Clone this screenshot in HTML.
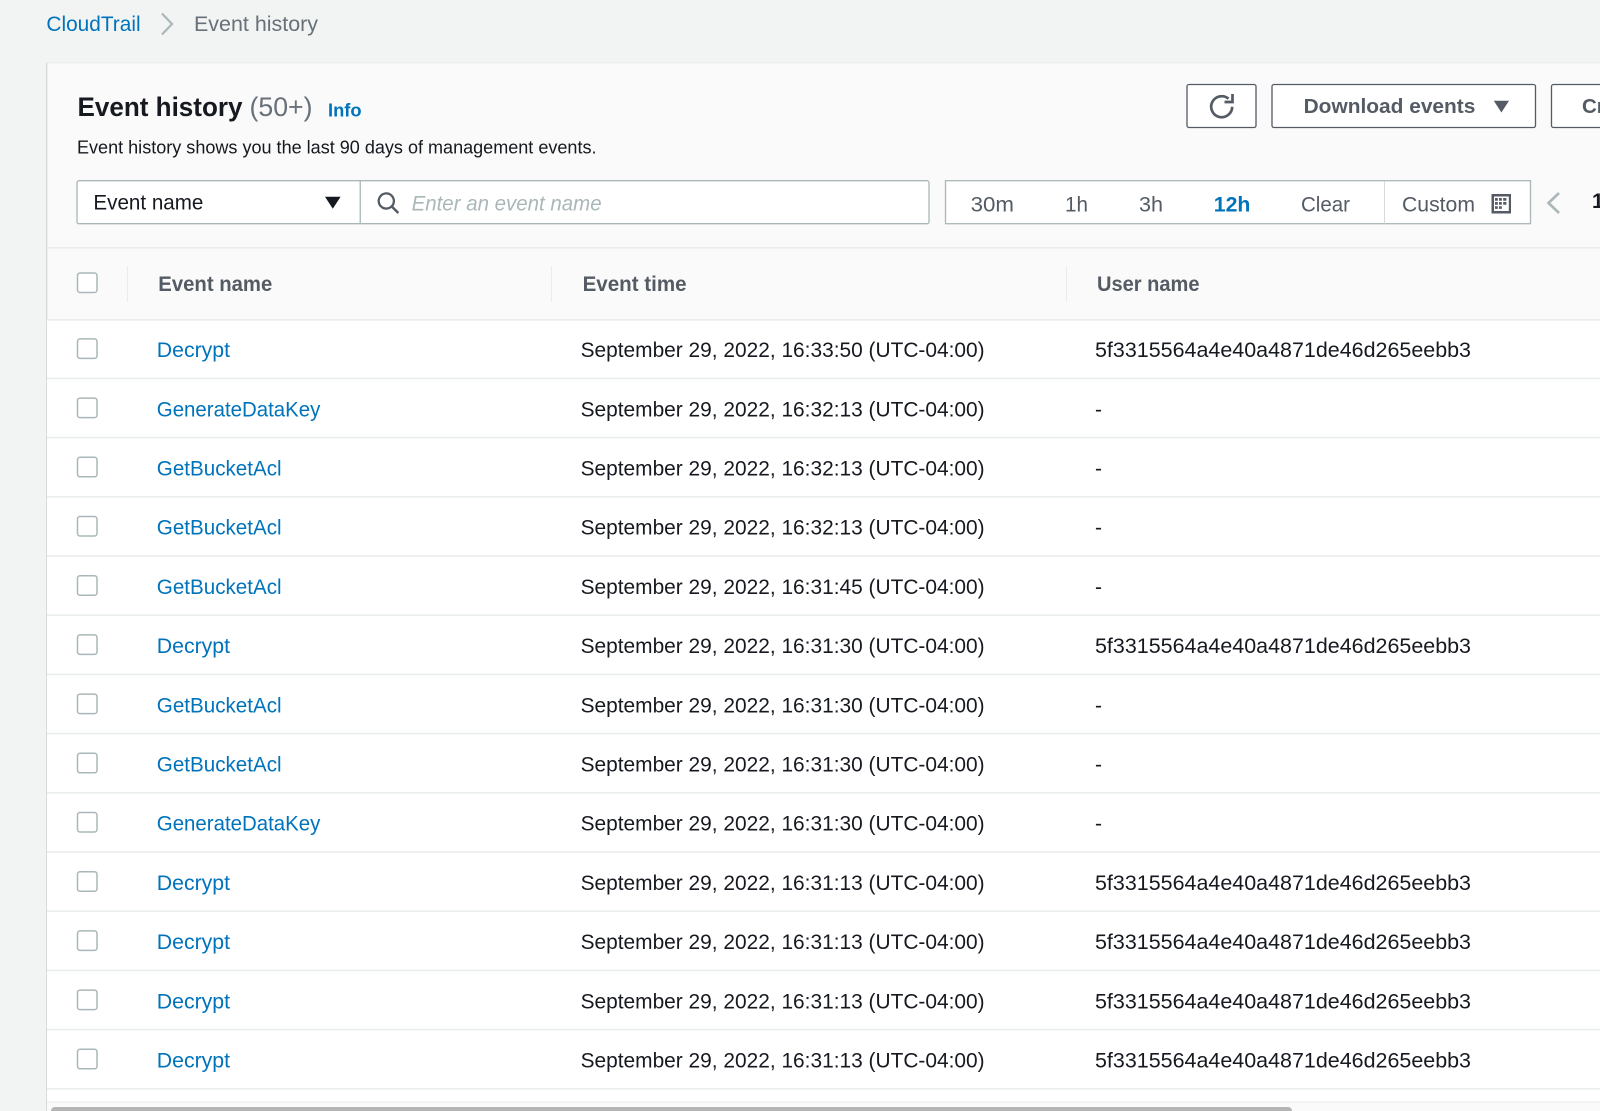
<!DOCTYPE html>
<html lang="en">
<head>
<meta charset="utf-8">
<title>CloudTrail Event history</title>
<style>
html,body{margin:0;padding:0;width:1600px;height:1111px;overflow:hidden;background:#f2f3f3}
svg{display:block}
text{font-family:"Liberation Sans",sans-serif;white-space:pre}
.r{font-size:21px;fill:#16191f}
.l{font-size:21px;fill:#0073bb}
.h{font-size:21px;font-weight:700;fill:#545b64}
.t{font-size:21px;fill:#545b64}
.cb{fill:#fff;stroke:#aab7b8;stroke-width:1.5}
</style>
</head>
<body>
<svg width="1600" height="1111" viewBox="0 0 1600 1111" xmlns="http://www.w3.org/2000/svg">
<defs>
<g id="cb"><rect class="cb" x="77.5" y="19.5" width="19.5" height="19.5" rx="2.5"/></g>
<g id="line"><rect x="47" y="58.2" width="1553" height="1.6" fill="#eaeded"/></g>
</defs>
<rect width="1600" height="1111" fill="#f2f3f3"/>

<!-- breadcrumb -->
<text x="46.4" y="31" font-size="21" fill="#0073bb" textLength="94.2" lengthAdjust="spacingAndGlyphs">CloudTrail</text>
<path d="M162 13.5 L172 24 L162 34.5" fill="none" stroke="#aab7b8" stroke-width="2.2"/>
<text x="194" y="31" font-size="21" fill="#687078" textLength="124" lengthAdjust="spacingAndGlyphs">Event history</text>

<!-- card -->
<rect x="46" y="63" width="1554" height="1048" fill="#fafafa"/>
<rect x="46" y="62.5" width="1554" height="1" fill="#eaeded"/>
<rect x="46" y="63" width="1.4" height="1048" fill="#d5dbdb"/>

<!-- title -->
<text x="77.5" y="116" font-size="26.6" font-weight="700" fill="#16191f" textLength="165" lengthAdjust="spacingAndGlyphs">Event history</text>
<text x="249.5" y="116" font-size="26.6" fill="#687078" textLength="63" lengthAdjust="spacingAndGlyphs">(50+)</text>
<text x="328" y="116.5" font-size="18.5" font-weight="700" fill="#0073bb" textLength="33.6" lengthAdjust="spacingAndGlyphs">Info</text>
<text x="77" y="153.3" font-size="18.4" fill="#16191f" textLength="519.5" lengthAdjust="spacingAndGlyphs">Event history shows you the last 90 days of management events.</text>

<!-- header buttons -->
<rect x="1187" y="84.5" width="69" height="43" rx="2" fill="#fff" stroke="#545b64" stroke-width="1.3"/>
<path d="M1232.2 106.800 A10.500 10.500 0 1 1 1228.500 98.700" fill="none" stroke="#545b64" stroke-width="2.700"/>
<path d="M1232.500 94 V102 H1224.500" fill="none" stroke="#545b64" stroke-width="2.700"/>
<rect x="1272" y="84.5" width="263.5" height="43" rx="2" fill="#fff" stroke="#545b64" stroke-width="1.3"/>
<text x="1303.6" y="113" font-size="20.5" font-weight="700" fill="#545b64" textLength="171.8" lengthAdjust="spacingAndGlyphs">Download events</text>
<path d="M1493.8 100.7 H1509 L1501.4 112.5 Z" fill="#545b64"/>
<rect x="1551.5" y="84.5" width="70" height="43" rx="2" fill="#fff" stroke="#545b64" stroke-width="1.3"/>
<text x="1582" y="113" font-size="20.5" font-weight="700" fill="#545b64">Create</text>

<!-- filter -->
<rect x="77" y="180.7" width="852" height="43" rx="2" fill="#fff" stroke="#aab7b8" stroke-width="1.3"/>
<rect x="359.6" y="181" width="1.3" height="43" fill="#aab7b8"/>
<text x="93.4" y="209.3" class="r" textLength="110" lengthAdjust="spacingAndGlyphs">Event name</text>
<path d="M325 196.7 H340.6 L332.8 208.7 Z" fill="#16191f"/>
<circle cx="386.3" cy="201" r="7.6" fill="none" stroke="#545b64" stroke-width="2.3"/>
<path d="M391.8 206.5 L398.3 213" fill="none" stroke="#545b64" stroke-width="2.5"/>
<text x="411.6" y="210.3" font-size="21" font-style="italic" fill="#aab7b8" textLength="190" lengthAdjust="spacingAndGlyphs">Enter an event name</text>

<!-- time range -->
<rect x="945.5" y="180.7" width="585" height="43" fill="#fff" stroke="#aab7b8" stroke-width="1.3"/>
<rect x="1384" y="181.5" width="1" height="42" fill="#d5dbdb"/>
<text x="970.6" y="211.5" class="t" textLength="43.4" lengthAdjust="spacingAndGlyphs">30m</text>
<text x="1065" y="211.5" class="t" textLength="23" lengthAdjust="spacingAndGlyphs">1h</text>
<text x="1139" y="211.5" class="t" textLength="24" lengthAdjust="spacingAndGlyphs">3h</text>
<text x="1213.8" y="211.5" font-size="21" font-weight="700" fill="#0073bb" textLength="36.6" lengthAdjust="spacingAndGlyphs">12h</text>
<text x="1301" y="211.5" class="t" textLength="49" lengthAdjust="spacingAndGlyphs">Clear</text>
<text x="1402" y="211.5" class="t" textLength="73" lengthAdjust="spacingAndGlyphs">Custom</text>
<rect x="1491.500" y="194" width="19.500" height="19.500" fill="#545b64"/>
<rect x="1494" y="196.500" width="14.800" height="14.500" fill="#fff"/>
<path d="M1495 198h2.800v2.700h-2.800zM1499 198h2.800v2.700h-2.800zM1503.200 198h3.200v2.700h-3.200zM1495 202h2.800v2.700h-2.800zM1499 202h2.800v2.700h-2.800zM1503.200 202h3.200v2.700h-3.200zM1495 206.200h2.800v2.700h-2.800zM1499 206.200h2.800v2.700h-2.800z" fill="#545b64"/>
<path d="M1559 193 L1548.500 203 L1559 213" fill="none" stroke="#aab7b8" stroke-width="2.600"/>
<text x="1592" y="208" font-size="21" font-weight="700" fill="#16191f">1</text>

<!-- table header -->
<rect x="47" y="247" width="1553" height="1.500" fill="#eaeded"/>
<rect class="cb" x="77.500" y="273" width="19.500" height="19.500" rx="2.500"/>
<rect x="127" y="266" width="1" height="36" fill="#eaeded"/>
<rect x="551" y="266" width="1" height="36" fill="#eaeded"/>
<rect x="1066" y="266" width="1" height="36" fill="#eaeded"/>
<text x="158.300" y="291" class="h" textLength="114" lengthAdjust="spacingAndGlyphs">Event name</text>
<text x="582.600" y="291" class="h" textLength="104" lengthAdjust="spacingAndGlyphs">Event time</text>
<text x="1097" y="291" class="h" textLength="102.500" lengthAdjust="spacingAndGlyphs">User name</text>

<!-- table body -->
<rect x="47" y="320" width="1553" height="782" fill="#fff"/>
<rect x="47" y="319" width="1553" height="1.600" fill="#eaeded"/>

<g transform="translate(0,319.400)"><use href="#cb"/><use href="#line"/><text x="156.800" y="37.700" class="l" textLength="73.200" lengthAdjust="spacingAndGlyphs">Decrypt</text><text x="580.600" y="37.700" class="r" textLength="404" lengthAdjust="spacingAndGlyphs">September 29, 2022, 16:33:50 (UTC-04:00)</text><text x="1095" y="37.700" class="r" textLength="376" lengthAdjust="spacingAndGlyphs">5f3315564a4e40a4871de46d265eebb3</text></g>
<g transform="translate(0,378.600)"><use href="#cb"/><use href="#line"/><text x="156.800" y="37.700" class="l" textLength="163.600" lengthAdjust="spacingAndGlyphs">GenerateDataKey</text><text x="580.600" y="37.700" class="r" textLength="404" lengthAdjust="spacingAndGlyphs">September 29, 2022, 16:32:13 (UTC-04:00)</text><text x="1095" y="37.700" class="r" textLength="8">-</text></g>
<g transform="translate(0,437.800)"><use href="#cb"/><use href="#line"/><text x="156.800" y="37.700" class="l" textLength="124.800" lengthAdjust="spacingAndGlyphs">GetBucketAcl</text><text x="580.600" y="37.700" class="r" textLength="404" lengthAdjust="spacingAndGlyphs">September 29, 2022, 16:32:13 (UTC-04:00)</text><text x="1095" y="37.700" class="r" textLength="8">-</text></g>
<g transform="translate(0,497)"><use href="#cb"/><use href="#line"/><text x="156.800" y="37.700" class="l" textLength="124.800" lengthAdjust="spacingAndGlyphs">GetBucketAcl</text><text x="580.600" y="37.700" class="r" textLength="404" lengthAdjust="spacingAndGlyphs">September 29, 2022, 16:32:13 (UTC-04:00)</text><text x="1095" y="37.700" class="r" textLength="8">-</text></g>
<g transform="translate(0,556.200)"><use href="#cb"/><use href="#line"/><text x="156.800" y="37.700" class="l" textLength="124.800" lengthAdjust="spacingAndGlyphs">GetBucketAcl</text><text x="580.600" y="37.700" class="r" textLength="404" lengthAdjust="spacingAndGlyphs">September 29, 2022, 16:31:45 (UTC-04:00)</text><text x="1095" y="37.700" class="r" textLength="8">-</text></g>
<g transform="translate(0,615.400)"><use href="#cb"/><use href="#line"/><text x="156.800" y="37.700" class="l" textLength="73.200" lengthAdjust="spacingAndGlyphs">Decrypt</text><text x="580.600" y="37.700" class="r" textLength="404" lengthAdjust="spacingAndGlyphs">September 29, 2022, 16:31:30 (UTC-04:00)</text><text x="1095" y="37.700" class="r" textLength="376" lengthAdjust="spacingAndGlyphs">5f3315564a4e40a4871de46d265eebb3</text></g>
<g transform="translate(0,674.600)"><use href="#cb"/><use href="#line"/><text x="156.800" y="37.700" class="l" textLength="124.800" lengthAdjust="spacingAndGlyphs">GetBucketAcl</text><text x="580.600" y="37.700" class="r" textLength="404" lengthAdjust="spacingAndGlyphs">September 29, 2022, 16:31:30 (UTC-04:00)</text><text x="1095" y="37.700" class="r" textLength="8">-</text></g>
<g transform="translate(0,733.800)"><use href="#cb"/><use href="#line"/><text x="156.800" y="37.700" class="l" textLength="124.800" lengthAdjust="spacingAndGlyphs">GetBucketAcl</text><text x="580.600" y="37.700" class="r" textLength="404" lengthAdjust="spacingAndGlyphs">September 29, 2022, 16:31:30 (UTC-04:00)</text><text x="1095" y="37.700" class="r" textLength="8">-</text></g>
<g transform="translate(0,793)"><use href="#cb"/><use href="#line"/><text x="156.800" y="37.700" class="l" textLength="163.600" lengthAdjust="spacingAndGlyphs">GenerateDataKey</text><text x="580.600" y="37.700" class="r" textLength="404" lengthAdjust="spacingAndGlyphs">September 29, 2022, 16:31:30 (UTC-04:00)</text><text x="1095" y="37.700" class="r" textLength="8">-</text></g>
<g transform="translate(0,852.200)"><use href="#cb"/><use href="#line"/><text x="156.800" y="37.700" class="l" textLength="73.200" lengthAdjust="spacingAndGlyphs">Decrypt</text><text x="580.600" y="37.700" class="r" textLength="404" lengthAdjust="spacingAndGlyphs">September 29, 2022, 16:31:13 (UTC-04:00)</text><text x="1095" y="37.700" class="r" textLength="376" lengthAdjust="spacingAndGlyphs">5f3315564a4e40a4871de46d265eebb3</text></g>
<g transform="translate(0,911.400)"><use href="#cb"/><use href="#line"/><text x="156.800" y="37.700" class="l" textLength="73.200" lengthAdjust="spacingAndGlyphs">Decrypt</text><text x="580.600" y="37.700" class="r" textLength="404" lengthAdjust="spacingAndGlyphs">September 29, 2022, 16:31:13 (UTC-04:00)</text><text x="1095" y="37.700" class="r" textLength="376" lengthAdjust="spacingAndGlyphs">5f3315564a4e40a4871de46d265eebb3</text></g>
<g transform="translate(0,970.600)"><use href="#cb"/><use href="#line"/><text x="156.800" y="37.700" class="l" textLength="73.200" lengthAdjust="spacingAndGlyphs">Decrypt</text><text x="580.600" y="37.700" class="r" textLength="404" lengthAdjust="spacingAndGlyphs">September 29, 2022, 16:31:13 (UTC-04:00)</text><text x="1095" y="37.700" class="r" textLength="376" lengthAdjust="spacingAndGlyphs">5f3315564a4e40a4871de46d265eebb3</text></g>
<g transform="translate(0,1029.800)"><use href="#cb"/><use href="#line"/><text x="156.800" y="37.700" class="l" textLength="73.200" lengthAdjust="spacingAndGlyphs">Decrypt</text><text x="580.600" y="37.700" class="r" textLength="404" lengthAdjust="spacingAndGlyphs">September 29, 2022, 16:31:13 (UTC-04:00)</text><text x="1095" y="37.700" class="r" textLength="376" lengthAdjust="spacingAndGlyphs">5f3315564a4e40a4871de46d265eebb3</text></g>

<!-- bottom scrollbar -->
<rect x="47" y="1102" width="1553" height="9" fill="#fafafa"/>
<rect x="47" y="1101.500" width="1553" height="1" fill="#eaeded"/>
<rect x="51" y="1107" width="1241" height="10" rx="4" fill="#b5b5b5"/>
</svg>
</body>
</html>
